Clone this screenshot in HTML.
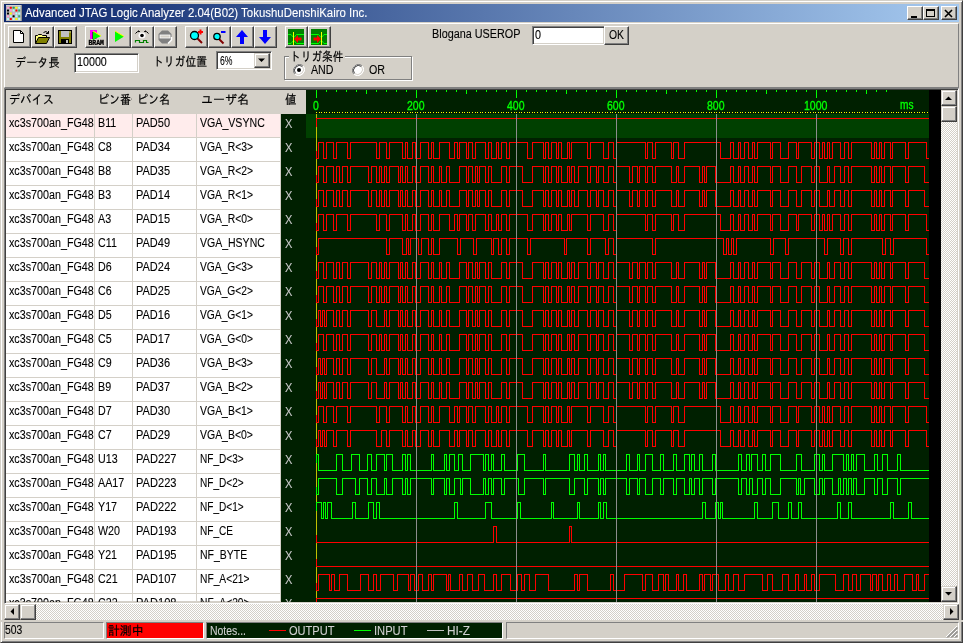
<!DOCTYPE html>
<html lang="ja"><head><meta charset="utf-8"><title>Advanced JTAG Logic Analyzer</title>
<style>
html,body{margin:0;padding:0}
body{width:963px;height:643px;overflow:hidden;background:#d4d0c8;position:relative;font-family:"Liberation Sans","IPAGothic",sans-serif;font-size:12px}
div,span,svg{position:absolute;box-sizing:border-box}
.t{white-space:pre;line-height:16px;height:16px;transform-origin:0 0;display:block}
.L{font-family:"Liberation Sans",sans-serif;-webkit-text-stroke:0.1px}
.J{font-family:"Liberation Sans","IPAGothic","Noto Sans CJK JP",sans-serif;-webkit-text-stroke:0.2px}
.btn{background:#d4d0c8;border:1px solid;border-color:#fff #404040 #404040 #fff;box-shadow:inset -1px -1px 0 #808080}
.sbtn{background:#d4d0c8;border:1px solid;border-color:#d4d0c8 #404040 #404040 #d4d0c8;box-shadow:inset -1px -1px 0 #808080,inset 1px 1px 0 #fff}
.sunk{background:#fff;border:1px solid;border-color:#808080 #fff #fff #808080;box-shadow:inset 1px 1px 0 #404040,inset -1px -1px 0 #d4d0c8}
.stat{border:1px solid;border-color:#808080 #fff #fff #808080}
.track{background:repeating-conic-gradient(#fff 0% 25%,#d4d0c8 0% 50%) 0 0/2px 2px}
.cell{border-right:1px solid #d4d0c8;border-bottom:1px solid #d4d0c8;background:#fff}
</style></head>
<body>
<div id="app" style="left:0;top:0;width:963px;height:643px;will-change:transform">
<div class="" style="left:0px;top:0px;width:963px;height:643px;border:1px solid;border-color:#d4d0c8 #404040 #404040 #d4d0c8;box-shadow:inset 1px 1px 0 #fff,inset -1px -1px 0 #808080"></div>
<div class="" style="left:4px;top:4px;width:955px;height:18px;background:linear-gradient(90deg,#0a246a 0%,#a6caf0 100%)"></div>
<svg style="left:6px;top:5px" width="16" height="16" viewBox="0 0 16 16"><rect width="16" height="16" fill="#b8b8b8"/><rect x="0" y="0" width="15" height="1" fill="#d0d0d0"/><rect x="15" y="0" width="1" height="16" fill="#909090"/><rect x="1.0" y="1.8" width="2" height="2" rx="0.5" fill="#ff9ad0"/><rect x="3.8" y="1.8" width="2" height="2" rx="0.5" fill="#ff0000"/><rect x="6.6" y="1.8" width="2" height="2" rx="0.5" fill="#20a060"/><rect x="9.4" y="1.8" width="2" height="2" rx="0.5" fill="#ffff00"/><rect x="12.2" y="1.8" width="2" height="2" rx="0.5" fill="#b0ffff"/><rect x="1.0" y="4.6" width="2" height="2" rx="0.5" fill="#000000"/><rect x="3.8" y="4.6" width="2" height="2" rx="0.5" fill="#ff9ad0"/><rect x="6.6" y="4.6" width="2" height="2" rx="0.5" fill="#b0ffff"/><rect x="9.4" y="4.6" width="2" height="2" rx="0.5" fill="#ff0000"/><rect x="12.2" y="4.6" width="2" height="2" rx="0.5" fill="#30b070"/><rect x="1.0" y="7.4" width="2" height="2" rx="0.5" fill="#000000"/><rect x="3.8" y="7.4" width="2" height="2" rx="0.5" fill="#ffff00"/><rect x="6.6" y="7.4" width="2" height="2" rx="0.5" fill="#ff9ad0"/><rect x="9.4" y="7.4" width="2" height="2" rx="0.5" fill="#b0ffff"/><rect x="12.2" y="7.4" width="2" height="2" rx="0.5" fill="#b0ffff"/><rect x="1.0" y="10.2" width="2" height="2" rx="0.5" fill="#ff9ad0"/><rect x="3.8" y="10.2" width="2" height="2" rx="0.5" fill="#b0ffff"/><rect x="6.6" y="10.2" width="2" height="2" rx="0.5" fill="#000000"/><rect x="9.4" y="10.2" width="2" height="2" rx="0.5" fill="#b0ffff"/><rect x="12.2" y="10.2" width="2" height="2" rx="0.5" fill="#30b070"/><rect x="1.0" y="13.0" width="2" height="2" rx="0.5" fill="#b0ffff"/><rect x="3.8" y="13.0" width="2" height="2" rx="0.5" fill="#ff0000"/><rect x="6.6" y="13.0" width="2" height="2" rx="0.5" fill="#b0ffff"/><rect x="9.4" y="13.0" width="2" height="2" rx="0.5" fill="#ffff00"/><rect x="12.2" y="13.0" width="2" height="2" rx="0.5" fill="#b0ffff"/></svg>
<div class="btn" style="left:907px;top:6px;width:16px;height:14px;"><svg style="left:0;top:0" width="14" height="12" viewBox="0 0 14 12"><rect x="3" y="9" width="6" height="2" fill="#000"/></svg></div>
<div class="btn" style="left:923px;top:6px;width:16px;height:14px;"><svg style="left:0;top:0" width="14" height="12" viewBox="0 0 14 12"><rect x="2.5" y="2.5" width="8" height="7" fill="none" stroke="#000"/><rect x="2" y="2" width="9" height="2" fill="#000"/></svg></div>
<div class="btn" style="left:941px;top:6px;width:16px;height:14px;"><svg style="left:0;top:0" width="14" height="12" viewBox="0 0 14 12"><path d="M3 3 L10 10 M10 3 L3 10" stroke="#000" stroke-width="1.6" fill="none"/></svg></div>
<div class="" style="left:4px;top:23px;width:955px;height:65px;border:1px solid;border-color:#fff #808080 #808080 #fff"></div>
<div class="btn" style="left:8px;top:26px;width:23px;height:22px;"><svg style="left:2px;top:2px" width="16" height="16" viewBox="0 0 16 16"><path d="M2.5 1.5 H9.5 L12.5 4.5 V13.5 H2.5 Z" fill="#fff" stroke="#000"/><path d="M9.5 1.5 V4.5 H12.5" fill="none" stroke="#000"/></svg></div>
<div class="btn" style="left:31px;top:26px;width:23px;height:22px;"><svg style="left:2px;top:2px" width="16" height="16" viewBox="0 0 16 16"><path d="M1.5 14.5 V6.5 H3.5 L4.5 5.5 H7.5 L8.5 6.5 H12.5 V8.5" fill="#ffff80" stroke="#000"/><path d="M1.5 14.5 L4.5 8.5 H15.5 L12.5 14.5 Z" fill="#808000" stroke="#000"/><path d="M9.5 3.5 Q12 1 14.5 4.5 M14.5 4.5 V2 M14.5 4.5 H12" fill="none" stroke="#000"/></svg></div>
<div class="btn" style="left:54px;top:26px;width:23px;height:22px;"><svg style="left:2px;top:2px" width="16" height="16" viewBox="0 0 16 16"><rect x="1.5" y="1.5" width="13" height="13" fill="#808000" stroke="#000"/><rect x="4" y="2" width="8" height="6" fill="#c0c0c0"/><rect x="4" y="10" width="8" height="5" fill="#000"/><rect x="9" y="11" width="2" height="3" fill="#c0c0c0"/><rect x="12.5" y="2.5" width="1" height="1" fill="#fff"/></svg></div>
<div class="btn" style="left:85px;top:26px;width:23px;height:22px;"><svg style="left:2px;top:2px" width="16" height="16" viewBox="0 0 16 16"><rect x="2" y="1" width="7" height="9" fill="#ff00ff"/><rect x="4" y="3" width="4" height="7" fill="#800080"/><path d="M5 2 L13 7 L5 11 Z" fill="#00ff00"/><path d="M5 2 L13 7" stroke="#ffff00" fill="none"/><text x="0.5" y="16" font-family="Liberation Mono,monospace" font-weight="bold" font-size="7" stroke="#000" stroke-width="0.3" textLength="15.5" lengthAdjust="spacingAndGlyphs" fill="#000">BRAM</text></svg></div>
<div class="btn" style="left:108px;top:26px;width:23px;height:22px;"><svg style="left:2px;top:2px" width="16" height="16" viewBox="0 0 16 16"><path d="M4 2 L13 7.5 L4 13 Z" fill="#00ff00"/><path d="M4 2 L13 7.5" stroke="#ffff00" fill="none"/></svg></div>
<div class="btn" style="left:131px;top:26px;width:23px;height:22px;"><svg style="left:2px;top:2px" width="16" height="16" viewBox="0 0 16 16"><ellipse cx="8" cy="6.5" rx="3.5" ry="3" fill="#fff"/><circle cx="8" cy="6.5" r="1.8" fill="#000"/><path d="M1.5 4.5 Q3 2 5.5 2.5 M10.5 2.5 Q13 2 14.5 4.5 M4.5 1.5 L5.5 3 M11.5 1.5 L10.5 3" stroke="#000" fill="none"/><path d="M1.5 13.5 V11.5 H5.5 V13.5 H9.5 V11.5 H12.5 V13.5 H14.5" stroke="#008000" fill="none" stroke-width="1.2"/></svg></div>
<div class="btn" style="left:154px;top:26px;width:23px;height:22px;"><svg style="left:2px;top:2px" width="16" height="16" viewBox="0 0 16 16"><path d="M5 1.5 H11 L14.5 5 V11 L11 14.5 H5 L1.5 11 V5 Z" fill="#808080"/><path d="M11 14.5 L14.5 11 V8" stroke="#fff" fill="none" stroke-width="1.5"/><rect x="3" y="6" width="10" height="3" fill="#d4d0c8" stroke="#fff" stroke-width="0.8"/></svg></div>
<div class="btn" style="left:185px;top:26px;width:23px;height:22px;"><svg style="left:2px;top:2px" width="16" height="16" viewBox="0 0 16 16"><path d="M9 9 L14 14" stroke="#800000" stroke-width="2"/><circle cx="6.5" cy="6.5" r="4" fill="#00ffff" stroke="#000" stroke-width="1.3"/><path d="M10 3 H15 M12.5 0.5 V5.5" stroke="#ff0000" stroke-width="2"/></svg></div>
<div class="btn" style="left:208px;top:26px;width:23px;height:22px;"><svg style="left:2px;top:2px" width="16" height="16" viewBox="0 0 16 16"><path d="M8 10 L12.5 14.5" stroke="#800000" stroke-width="2"/><circle cx="6" cy="7.5" r="3.2" fill="#00ffff" stroke="#000" stroke-width="1.3"/><path d="M10 3 H14.5" stroke="#0000ff" stroke-width="2"/></svg></div>
<div class="btn" style="left:231px;top:26px;width:23px;height:22px;"><svg style="left:2px;top:2px" width="16" height="16" viewBox="0 0 16 16"><path d="M8 1 L14 8 H10 V15 H6 V8 H2 Z" fill="#0000ff"/></svg></div>
<div class="btn" style="left:254px;top:26px;width:23px;height:22px;"><svg style="left:2px;top:2px" width="16" height="16" viewBox="0 0 16 16"><path d="M8 15 L14 8 H10 V1 H6 V8 H2 Z" fill="#0000ff"/></svg></div>
<div class="btn" style="left:285px;top:26px;width:23px;height:22px;"><svg style="left:2px;top:2px" width="16" height="16" viewBox="0 0 16 16"><rect width="16" height="16" fill="#008000"/><path d="M0 5.5 H3 L5.5 8.5 M0 14.5 H3 L5.5 11.5 M16 5.5 H8.5 L6 8.5 M16 14.5 H8.5 L6 11.5" stroke="#00ff00" fill="none"/><path d="M5.5 3 V16" stroke="#ffff00"/><path d="M6 10 L10 6 V8.5 H13.5 V11.5 H10 V14 Z" fill="#ff0000"/></svg></div>
<div class="btn" style="left:308px;top:26px;width:23px;height:22px;"><svg style="left:2px;top:2px" width="16" height="16" viewBox="0 0 16 16"><rect width="16" height="16" fill="#008000"/><path d="M16 5.5 H13 L10.5 8.5 M16 14.5 H13 L10.5 11.5 M0 5.5 H7.5 L10 8.5 M0 14.5 H7.5 L10 11.5" stroke="#00ff00" fill="none"/><path d="M10.5 3 V16" stroke="#ffff00"/><path d="M10 10 L6 6 V8.5 H2.5 V11.5 H6 V14 Z" fill="#ff0000"/></svg></div>
<div class="sunk" style="left:74px;top:53px;width:65px;height:20px;"></div>
<div class="sunk" style="left:216px;top:51px;width:56px;height:19px;"></div>
<div class="sbtn" style="left:254px;top:53px;width:16px;height:15px;"><svg style="left:0;top:0" width="14" height="13"><path d="M3 4.5 H10 L6.5 8 Z" fill="#000"/></svg></div>
<div class="" style="left:284px;top:56px;width:128px;height:24px;border:1px solid;border-color:#808080 #fff #fff #808080;box-shadow:inset 1px 1px 0 #fff, 1px 1px 0 #fff"></div>
<div class="" style="left:284px;top:56px;width:128px;height:24px;border:1px solid;border-color:#808080"></div>
<div class="" style="left:289px;top:50px;width:56px;height:12px;background:#d4d0c8"></div>
<svg style="left:293px;top:64px" width="12" height="12" viewBox="0 0 12 12"><circle cx="6" cy="6" r="5.5" fill="#fff"/><path d="M1.8 10.2 A6 6 0 0 1 10.2 1.8" stroke="#808080" fill="none" stroke-width="1"/><path d="M2.5 9.5 A5 5 0 0 1 9.5 2.5" stroke="#404040" fill="none" stroke-width="1"/><path d="M10.2 1.8 A6 6 0 0 1 1.8 10.2" stroke="#fff" fill="none" stroke-width="1"/><path d="M9.5 2.5 A5 5 0 0 1 2.5 9.5" stroke="#d4d0c8" fill="none" stroke-width="1"/><circle cx="6" cy="6" r="2" fill="#000"/></svg>
<svg style="left:352px;top:64px" width="12" height="12" viewBox="0 0 12 12"><circle cx="6" cy="6" r="5.5" fill="#fff"/><path d="M1.8 10.2 A6 6 0 0 1 10.2 1.8" stroke="#808080" fill="none" stroke-width="1"/><path d="M2.5 9.5 A5 5 0 0 1 9.5 2.5" stroke="#404040" fill="none" stroke-width="1"/><path d="M10.2 1.8 A6 6 0 0 1 1.8 10.2" stroke="#fff" fill="none" stroke-width="1"/><path d="M9.5 2.5 A5 5 0 0 1 2.5 9.5" stroke="#d4d0c8" fill="none" stroke-width="1"/></svg>
<div class="sunk" style="left:532px;top:26px;width:73px;height:19px;"></div>
<div class="btn" style="left:604px;top:26px;width:25px;height:19px;"></div>
<div class="" style="left:4px;top:88px;width:955px;height:516px;border:1px solid;border-color:#808080 #fff #fff #808080;box-shadow:inset 1px 1px 0 #404040,inset -1px -1px 0 #d4d0c8"></div>
<div class="" style="left:6px;top:90px;width:300px;height:512px;background:#fff"></div>
<div class="" style="left:6px;top:90px;width:300px;height:24px;background:#d4d0c8"></div>
<div class="cell" style="left:6px;top:114px;width:89px;height:24px;background:#ffecec"></div>
<div class="cell" style="left:95px;top:114px;width:38px;height:24px;background:#ffecec"></div>
<div class="cell" style="left:133px;top:114px;width:64px;height:24px;background:#ffecec"></div>
<div class="cell" style="left:197px;top:114px;width:84px;height:24px;background:#ffecec"></div>
<div class="" style="left:281px;top:114px;width:25px;height:24px;background:#002000"></div>
<div class="cell" style="left:6px;top:138px;width:89px;height:24px;background:#fff"></div>
<div class="cell" style="left:95px;top:138px;width:38px;height:24px;background:#fff"></div>
<div class="cell" style="left:133px;top:138px;width:64px;height:24px;background:#fff"></div>
<div class="cell" style="left:197px;top:138px;width:84px;height:24px;background:#fff"></div>
<div class="" style="left:281px;top:138px;width:25px;height:24px;background:#002000"></div>
<div class="cell" style="left:6px;top:162px;width:89px;height:24px;background:#fff"></div>
<div class="cell" style="left:95px;top:162px;width:38px;height:24px;background:#fff"></div>
<div class="cell" style="left:133px;top:162px;width:64px;height:24px;background:#fff"></div>
<div class="cell" style="left:197px;top:162px;width:84px;height:24px;background:#fff"></div>
<div class="" style="left:281px;top:162px;width:25px;height:24px;background:#002000"></div>
<div class="cell" style="left:6px;top:186px;width:89px;height:24px;background:#fff"></div>
<div class="cell" style="left:95px;top:186px;width:38px;height:24px;background:#fff"></div>
<div class="cell" style="left:133px;top:186px;width:64px;height:24px;background:#fff"></div>
<div class="cell" style="left:197px;top:186px;width:84px;height:24px;background:#fff"></div>
<div class="" style="left:281px;top:186px;width:25px;height:24px;background:#002000"></div>
<div class="cell" style="left:6px;top:210px;width:89px;height:24px;background:#fff"></div>
<div class="cell" style="left:95px;top:210px;width:38px;height:24px;background:#fff"></div>
<div class="cell" style="left:133px;top:210px;width:64px;height:24px;background:#fff"></div>
<div class="cell" style="left:197px;top:210px;width:84px;height:24px;background:#fff"></div>
<div class="" style="left:281px;top:210px;width:25px;height:24px;background:#002000"></div>
<div class="cell" style="left:6px;top:234px;width:89px;height:24px;background:#fff"></div>
<div class="cell" style="left:95px;top:234px;width:38px;height:24px;background:#fff"></div>
<div class="cell" style="left:133px;top:234px;width:64px;height:24px;background:#fff"></div>
<div class="cell" style="left:197px;top:234px;width:84px;height:24px;background:#fff"></div>
<div class="" style="left:281px;top:234px;width:25px;height:24px;background:#002000"></div>
<div class="cell" style="left:6px;top:258px;width:89px;height:24px;background:#fff"></div>
<div class="cell" style="left:95px;top:258px;width:38px;height:24px;background:#fff"></div>
<div class="cell" style="left:133px;top:258px;width:64px;height:24px;background:#fff"></div>
<div class="cell" style="left:197px;top:258px;width:84px;height:24px;background:#fff"></div>
<div class="" style="left:281px;top:258px;width:25px;height:24px;background:#002000"></div>
<div class="cell" style="left:6px;top:282px;width:89px;height:24px;background:#fff"></div>
<div class="cell" style="left:95px;top:282px;width:38px;height:24px;background:#fff"></div>
<div class="cell" style="left:133px;top:282px;width:64px;height:24px;background:#fff"></div>
<div class="cell" style="left:197px;top:282px;width:84px;height:24px;background:#fff"></div>
<div class="" style="left:281px;top:282px;width:25px;height:24px;background:#002000"></div>
<div class="cell" style="left:6px;top:306px;width:89px;height:24px;background:#fff"></div>
<div class="cell" style="left:95px;top:306px;width:38px;height:24px;background:#fff"></div>
<div class="cell" style="left:133px;top:306px;width:64px;height:24px;background:#fff"></div>
<div class="cell" style="left:197px;top:306px;width:84px;height:24px;background:#fff"></div>
<div class="" style="left:281px;top:306px;width:25px;height:24px;background:#002000"></div>
<div class="cell" style="left:6px;top:330px;width:89px;height:24px;background:#fff"></div>
<div class="cell" style="left:95px;top:330px;width:38px;height:24px;background:#fff"></div>
<div class="cell" style="left:133px;top:330px;width:64px;height:24px;background:#fff"></div>
<div class="cell" style="left:197px;top:330px;width:84px;height:24px;background:#fff"></div>
<div class="" style="left:281px;top:330px;width:25px;height:24px;background:#002000"></div>
<div class="cell" style="left:6px;top:354px;width:89px;height:24px;background:#fff"></div>
<div class="cell" style="left:95px;top:354px;width:38px;height:24px;background:#fff"></div>
<div class="cell" style="left:133px;top:354px;width:64px;height:24px;background:#fff"></div>
<div class="cell" style="left:197px;top:354px;width:84px;height:24px;background:#fff"></div>
<div class="" style="left:281px;top:354px;width:25px;height:24px;background:#002000"></div>
<div class="cell" style="left:6px;top:378px;width:89px;height:24px;background:#fff"></div>
<div class="cell" style="left:95px;top:378px;width:38px;height:24px;background:#fff"></div>
<div class="cell" style="left:133px;top:378px;width:64px;height:24px;background:#fff"></div>
<div class="cell" style="left:197px;top:378px;width:84px;height:24px;background:#fff"></div>
<div class="" style="left:281px;top:378px;width:25px;height:24px;background:#002000"></div>
<div class="cell" style="left:6px;top:402px;width:89px;height:24px;background:#fff"></div>
<div class="cell" style="left:95px;top:402px;width:38px;height:24px;background:#fff"></div>
<div class="cell" style="left:133px;top:402px;width:64px;height:24px;background:#fff"></div>
<div class="cell" style="left:197px;top:402px;width:84px;height:24px;background:#fff"></div>
<div class="" style="left:281px;top:402px;width:25px;height:24px;background:#002000"></div>
<div class="cell" style="left:6px;top:426px;width:89px;height:24px;background:#fff"></div>
<div class="cell" style="left:95px;top:426px;width:38px;height:24px;background:#fff"></div>
<div class="cell" style="left:133px;top:426px;width:64px;height:24px;background:#fff"></div>
<div class="cell" style="left:197px;top:426px;width:84px;height:24px;background:#fff"></div>
<div class="" style="left:281px;top:426px;width:25px;height:24px;background:#002000"></div>
<div class="cell" style="left:6px;top:450px;width:89px;height:24px;background:#fff"></div>
<div class="cell" style="left:95px;top:450px;width:38px;height:24px;background:#fff"></div>
<div class="cell" style="left:133px;top:450px;width:64px;height:24px;background:#fff"></div>
<div class="cell" style="left:197px;top:450px;width:84px;height:24px;background:#fff"></div>
<div class="" style="left:281px;top:450px;width:25px;height:24px;background:#002000"></div>
<div class="cell" style="left:6px;top:474px;width:89px;height:24px;background:#fff"></div>
<div class="cell" style="left:95px;top:474px;width:38px;height:24px;background:#fff"></div>
<div class="cell" style="left:133px;top:474px;width:64px;height:24px;background:#fff"></div>
<div class="cell" style="left:197px;top:474px;width:84px;height:24px;background:#fff"></div>
<div class="" style="left:281px;top:474px;width:25px;height:24px;background:#002000"></div>
<div class="cell" style="left:6px;top:498px;width:89px;height:24px;background:#fff"></div>
<div class="cell" style="left:95px;top:498px;width:38px;height:24px;background:#fff"></div>
<div class="cell" style="left:133px;top:498px;width:64px;height:24px;background:#fff"></div>
<div class="cell" style="left:197px;top:498px;width:84px;height:24px;background:#fff"></div>
<div class="" style="left:281px;top:498px;width:25px;height:24px;background:#002000"></div>
<div class="cell" style="left:6px;top:522px;width:89px;height:24px;background:#fff"></div>
<div class="cell" style="left:95px;top:522px;width:38px;height:24px;background:#fff"></div>
<div class="cell" style="left:133px;top:522px;width:64px;height:24px;background:#fff"></div>
<div class="cell" style="left:197px;top:522px;width:84px;height:24px;background:#fff"></div>
<div class="" style="left:281px;top:522px;width:25px;height:24px;background:#002000"></div>
<div class="cell" style="left:6px;top:546px;width:89px;height:24px;background:#fff"></div>
<div class="cell" style="left:95px;top:546px;width:38px;height:24px;background:#fff"></div>
<div class="cell" style="left:133px;top:546px;width:64px;height:24px;background:#fff"></div>
<div class="cell" style="left:197px;top:546px;width:84px;height:24px;background:#fff"></div>
<div class="" style="left:281px;top:546px;width:25px;height:24px;background:#002000"></div>
<div class="cell" style="left:6px;top:570px;width:89px;height:24px;background:#fff"></div>
<div class="cell" style="left:95px;top:570px;width:38px;height:24px;background:#fff"></div>
<div class="cell" style="left:133px;top:570px;width:64px;height:24px;background:#fff"></div>
<div class="cell" style="left:197px;top:570px;width:84px;height:24px;background:#fff"></div>
<div class="" style="left:281px;top:570px;width:25px;height:24px;background:#002000"></div>
<div class="cell" style="left:6px;top:594px;width:89px;height:8px;background:#fff"></div>
<div class="cell" style="left:95px;top:594px;width:38px;height:8px;background:#fff"></div>
<div class="cell" style="left:133px;top:594px;width:64px;height:8px;background:#fff"></div>
<div class="cell" style="left:197px;top:594px;width:84px;height:8px;background:#fff"></div>
<div class="" style="left:281px;top:594px;width:25px;height:8px;background:#002000"></div>
<svg style="left:306px;top:90px" width="623" height="512" viewBox="306 90 623 512" shape-rendering="crispEdges"><rect x="306" y="90" width="623" height="512" fill="#002000"/><rect x="306" y="114" width="623" height="24" fill="#004000"/><path d="M316.5 90 v8 M326.5 90 v2 M336.5 90 v2 M346.5 90 v2 M356.5 90 v2 M366.5 90 v4 M376.5 90 v2 M386.5 90 v2 M396.5 90 v2 M406.5 90 v2 M416.5 90 v8 M426.5 90 v2 M436.5 90 v2 M446.5 90 v2 M456.5 90 v2 M466.5 90 v4 M476.5 90 v2 M486.5 90 v2 M496.5 90 v2 M506.5 90 v2 M516.5 90 v8 M526.5 90 v2 M536.5 90 v2 M546.5 90 v2 M556.5 90 v2 M566.5 90 v4 M576.5 90 v2 M586.5 90 v2 M596.5 90 v2 M606.5 90 v2 M616.5 90 v8 M626.5 90 v2 M636.5 90 v2 M646.5 90 v2 M656.5 90 v2 M666.5 90 v4 M676.5 90 v2 M686.5 90 v2 M696.5 90 v2 M706.5 90 v2 M716.5 90 v8 M726.5 90 v2 M736.5 90 v2 M746.5 90 v2 M756.5 90 v2 M766.5 90 v4 M776.5 90 v2 M786.5 90 v2 M796.5 90 v2 M806.5 90 v2 M816.5 90 v8 M826.5 90 v2 M836.5 90 v2 M846.5 90 v2 M856.5 90 v2 M866.5 90 v4 M876.5 90 v2 M886.5 90 v2" stroke="#00ff00" fill="none"/><path d="M316 112.5 H929" stroke="#ffff00" stroke-dasharray="1 1.6" fill="none"/><path d="M316.5 114 V602" stroke="#c0c000" fill="none"/><path d="M316.5 126.5 V118.5H929" stroke="#ff0000" fill="none"/><path d="M316.5 150.5 V158.5H318.5 V142.5H323.5 V158.5H326.5 V142.5H333.5 V158.5H336.5 V142.5H347.5 V158.5H350.5 V142.5H376.5 V158.5H379.5 V142.5H386.5 V158.5H389.5 V142.5H402.5 V158.5H405.5 V142.5H407.5 V158.5H412.5 V142.5H415.5 V158.5H420.5 V142.5H428.5 V158.5H431.5 V142.5H433.5 V158.5H439.5 V142.5H449.5 V158.5H454.5 V142.5H457.5 V158.5H459.5 V142.5H466.5 V158.5H468.5 V142.5H472.5 V158.5H475.5 V142.5H485.5 V158.5H488.5 V142.5H491.5 V158.5H496.5 V142.5H498.5 V158.5H501.5 V142.5H506.5 V158.5H509.5 V142.5H527.5 V158.5H532.5 V142.5H543.5 V158.5H545.5 V142.5H548.5 V158.5H551.5 V142.5H556.5 V158.5H558.5 V142.5H561.5 V158.5H567.5 V142.5H569.5 V158.5H571.5 V142.5H587.5 V158.5H590.5 V142.5H603.5 V158.5H608.5 V142.5H613.5 V158.5H616.5 V142.5H645.5 V158.5H647.5 V142.5H652.5 V158.5H655.5 V142.5H671.5 V158.5H673.5 V142.5H678.5 V158.5H684.5 V142.5H720.5 V158.5H730.5 V142.5H733.5 V158.5H738.5 V142.5H740.5 V158.5H744.5 V142.5H748.5 V158.5H752.5 V142.5H754.5 V158.5H757.5 V142.5H770.5 V158.5H772.5 V142.5H780.5 V158.5H788.5 V142.5H796.5 V158.5H798.5 V142.5H811.5 V158.5H814.5 V142.5H819.5 V158.5H822.5 V142.5H824.5 V158.5H827.5 V142.5H829.5 V158.5H832.5 V142.5H840.5 V158.5H844.5 V142.5H848.5 V158.5H851.5 V142.5H871.5 V158.5H874.5 V142.5H876.5 V158.5H879.5 V142.5H881.5 V158.5H884.5 V142.5H890.5 V158.5H892.5 V142.5H905.5 V158.5H908.5 V142.5H926.5 V158.5H929" stroke="#ff0000" fill="none"/><path d="M316.5 174.5 V182.5H318.5 V166.5H323.5 V182.5H326.5 V166.5H333.5 V182.5H336.5 V166.5H339.5 V182.5H342.5 V166.5H347.5 V182.5H350.5 V166.5H368.5 V182.5H371.5 V166.5H376.5 V182.5H379.5 V166.5H381.5 V182.5H384.5 V166.5H386.5 V182.5H389.5 V166.5H398.5 V182.5H400.5 V166.5H402.5 V182.5H405.5 V166.5H407.5 V182.5H412.5 V166.5H415.5 V182.5H420.5 V166.5H428.5 V182.5H431.5 V166.5H433.5 V182.5H439.5 V166.5H441.5 V182.5H446.5 V166.5H449.5 V182.5H459.5 V166.5H466.5 V182.5H468.5 V166.5H472.5 V182.5H475.5 V166.5H477.5 V182.5H479.5 V166.5H485.5 V182.5H488.5 V166.5H491.5 V182.5H501.5 V166.5H506.5 V182.5H509.5 V166.5H522.5 V182.5H532.5 V166.5H543.5 V182.5H545.5 V166.5H548.5 V182.5H551.5 V166.5H556.5 V182.5H558.5 V166.5H561.5 V182.5H567.5 V166.5H569.5 V182.5H571.5 V166.5H574.5 V182.5H578.5 V166.5H587.5 V182.5H590.5 V166.5H596.5 V182.5H598.5 V166.5H603.5 V182.5H608.5 V166.5H613.5 V182.5H616.5 V166.5H629.5 V182.5H632.5 V166.5H637.5 V182.5H639.5 V166.5H645.5 V182.5H647.5 V166.5H652.5 V182.5H655.5 V166.5H671.5 V182.5H676.5 V166.5H678.5 V182.5H684.5 V166.5H699.5 V182.5H702.5 V166.5H704.5 V182.5H706.5 V166.5H715.5 V182.5H730.5 V166.5H733.5 V182.5H738.5 V166.5H740.5 V182.5H744.5 V166.5H748.5 V182.5H752.5 V166.5H754.5 V182.5H757.5 V166.5H770.5 V182.5H772.5 V166.5H780.5 V182.5H788.5 V166.5H796.5 V182.5H801.5 V166.5H811.5 V182.5H814.5 V166.5H819.5 V182.5H827.5 V166.5H829.5 V182.5H834.5 V166.5H840.5 V182.5H844.5 V166.5H848.5 V182.5H851.5 V166.5H871.5 V182.5H874.5 V166.5H876.5 V182.5H879.5 V166.5H881.5 V182.5H884.5 V166.5H890.5 V182.5H892.5 V166.5H905.5 V182.5H908.5 V166.5H924.5 V182.5H929" stroke="#ff0000" fill="none"/><path d="M316.5 198.5 V206.5H318.5 V190.5H323.5 V206.5H326.5 V190.5H333.5 V206.5H336.5 V190.5H339.5 V206.5H342.5 V190.5H347.5 V206.5H350.5 V190.5H368.5 V206.5H371.5 V190.5H376.5 V206.5H379.5 V190.5H381.5 V206.5H384.5 V190.5H386.5 V206.5H389.5 V190.5H398.5 V206.5H400.5 V190.5H402.5 V206.5H405.5 V190.5H407.5 V206.5H412.5 V190.5H415.5 V206.5H420.5 V190.5H428.5 V206.5H431.5 V190.5H433.5 V206.5H439.5 V190.5H441.5 V206.5H446.5 V190.5H449.5 V206.5H459.5 V190.5H466.5 V206.5H468.5 V190.5H472.5 V206.5H475.5 V190.5H477.5 V206.5H479.5 V190.5H485.5 V206.5H488.5 V190.5H491.5 V206.5H501.5 V190.5H506.5 V206.5H509.5 V190.5H522.5 V206.5H532.5 V190.5H543.5 V206.5H545.5 V190.5H548.5 V206.5H551.5 V190.5H556.5 V206.5H558.5 V190.5H561.5 V206.5H567.5 V190.5H569.5 V206.5H571.5 V190.5H574.5 V206.5H578.5 V190.5H587.5 V206.5H590.5 V190.5H596.5 V206.5H598.5 V190.5H603.5 V206.5H608.5 V190.5H613.5 V206.5H616.5 V190.5H629.5 V206.5H632.5 V190.5H637.5 V206.5H639.5 V190.5H645.5 V206.5H647.5 V190.5H652.5 V206.5H655.5 V190.5H671.5 V206.5H676.5 V190.5H678.5 V206.5H684.5 V190.5H699.5 V206.5H702.5 V190.5H704.5 V206.5H706.5 V190.5H715.5 V206.5H730.5 V190.5H733.5 V206.5H738.5 V190.5H740.5 V206.5H744.5 V190.5H748.5 V206.5H752.5 V190.5H754.5 V206.5H757.5 V190.5H770.5 V206.5H772.5 V190.5H780.5 V206.5H788.5 V190.5H796.5 V206.5H801.5 V190.5H811.5 V206.5H814.5 V190.5H819.5 V206.5H827.5 V190.5H829.5 V206.5H834.5 V190.5H840.5 V206.5H844.5 V190.5H848.5 V206.5H851.5 V190.5H871.5 V206.5H874.5 V190.5H876.5 V206.5H879.5 V190.5H881.5 V206.5H884.5 V190.5H890.5 V206.5H892.5 V190.5H905.5 V206.5H908.5 V190.5H924.5 V206.5H929" stroke="#ff0000" fill="none"/><path d="M316.5 222.5 V230.5H318.5 V214.5H323.5 V230.5H326.5 V214.5H333.5 V230.5H336.5 V214.5H347.5 V230.5H350.5 V214.5H376.5 V230.5H379.5 V214.5H386.5 V230.5H389.5 V214.5H402.5 V230.5H405.5 V214.5H407.5 V230.5H412.5 V214.5H415.5 V230.5H420.5 V214.5H428.5 V230.5H431.5 V214.5H433.5 V230.5H439.5 V214.5H449.5 V230.5H454.5 V214.5H457.5 V230.5H459.5 V214.5H466.5 V230.5H468.5 V214.5H472.5 V230.5H475.5 V214.5H485.5 V230.5H488.5 V214.5H491.5 V230.5H496.5 V214.5H498.5 V230.5H501.5 V214.5H506.5 V230.5H509.5 V214.5H527.5 V230.5H532.5 V214.5H543.5 V230.5H545.5 V214.5H548.5 V230.5H551.5 V214.5H556.5 V230.5H558.5 V214.5H561.5 V230.5H567.5 V214.5H569.5 V230.5H571.5 V214.5H587.5 V230.5H590.5 V214.5H603.5 V230.5H608.5 V214.5H613.5 V230.5H616.5 V214.5H645.5 V230.5H647.5 V214.5H652.5 V230.5H655.5 V214.5H671.5 V230.5H673.5 V214.5H678.5 V230.5H684.5 V214.5H720.5 V230.5H730.5 V214.5H733.5 V230.5H738.5 V214.5H740.5 V230.5H744.5 V214.5H748.5 V230.5H752.5 V214.5H754.5 V230.5H757.5 V214.5H770.5 V230.5H772.5 V214.5H780.5 V230.5H788.5 V214.5H796.5 V230.5H798.5 V214.5H811.5 V230.5H814.5 V214.5H819.5 V230.5H822.5 V214.5H824.5 V230.5H827.5 V214.5H829.5 V230.5H832.5 V214.5H840.5 V230.5H844.5 V214.5H848.5 V230.5H851.5 V214.5H871.5 V230.5H874.5 V214.5H876.5 V230.5H879.5 V214.5H881.5 V230.5H884.5 V214.5H890.5 V230.5H892.5 V214.5H905.5 V230.5H908.5 V214.5H926.5 V230.5H929" stroke="#ff0000" fill="none"/><path d="M316.5 246.5 V254.5H318.5 V238.5H386.5 V254.5H389.5 V238.5H402.5 V254.5H406.5 V238.5H408.5 V254.5H410.5 V238.5H418.5 V254.5H421.5 V238.5H428.5 V254.5H431.5 V238.5H433.5 V254.5H439.5 V238.5H457.5 V254.5H460.5 V238.5H473.5 V254.5H476.5 V238.5H491.5 V254.5H493.5 V238.5H498.5 V254.5H501.5 V238.5H506.5 V254.5H509.5 V238.5H527.5 V254.5H530.5 V238.5H564.5 V254.5H566.5 V238.5H587.5 V254.5H590.5 V238.5H605.5 V254.5H608.5 V238.5H613.5 V254.5H616.5 V238.5H652.5 V254.5H655.5 V238.5H723.5 V254.5H726.5 V238.5H728.5 V254.5H731.5 V238.5H733.5 V254.5H736.5 V238.5H770.5 V254.5H773.5 V238.5H785.5 V254.5H788.5 V238.5H824.5 V254.5H827.5 V238.5H840.5 V254.5H843.5 V238.5H848.5 V254.5H851.5 V238.5H882.5 V254.5H885.5 V238.5H890.5 V254.5H893.5 V238.5H926.5 V254.5H929" stroke="#ff0000" fill="none"/><path d="M316.5 270.5 V278.5H318.5 V262.5H323.5 V278.5H326.5 V262.5H333.5 V278.5H336.5 V262.5H339.5 V278.5H342.5 V262.5H347.5 V278.5H350.5 V262.5H368.5 V278.5H371.5 V262.5H376.5 V278.5H379.5 V262.5H381.5 V278.5H384.5 V262.5H386.5 V278.5H389.5 V262.5H398.5 V278.5H400.5 V262.5H402.5 V278.5H405.5 V262.5H407.5 V278.5H412.5 V262.5H415.5 V278.5H420.5 V262.5H428.5 V278.5H431.5 V262.5H433.5 V278.5H439.5 V262.5H441.5 V278.5H446.5 V262.5H449.5 V278.5H459.5 V262.5H466.5 V278.5H468.5 V262.5H472.5 V278.5H475.5 V262.5H477.5 V278.5H479.5 V262.5H485.5 V278.5H488.5 V262.5H491.5 V278.5H501.5 V262.5H506.5 V278.5H509.5 V262.5H522.5 V278.5H532.5 V262.5H543.5 V278.5H545.5 V262.5H548.5 V278.5H551.5 V262.5H556.5 V278.5H558.5 V262.5H561.5 V278.5H567.5 V262.5H569.5 V278.5H571.5 V262.5H574.5 V278.5H578.5 V262.5H587.5 V278.5H590.5 V262.5H596.5 V278.5H598.5 V262.5H603.5 V278.5H608.5 V262.5H613.5 V278.5H616.5 V262.5H629.5 V278.5H632.5 V262.5H637.5 V278.5H639.5 V262.5H645.5 V278.5H647.5 V262.5H652.5 V278.5H655.5 V262.5H671.5 V278.5H676.5 V262.5H678.5 V278.5H684.5 V262.5H699.5 V278.5H702.5 V262.5H704.5 V278.5H706.5 V262.5H715.5 V278.5H730.5 V262.5H733.5 V278.5H738.5 V262.5H740.5 V278.5H744.5 V262.5H748.5 V278.5H752.5 V262.5H754.5 V278.5H757.5 V262.5H770.5 V278.5H772.5 V262.5H780.5 V278.5H788.5 V262.5H796.5 V278.5H801.5 V262.5H811.5 V278.5H814.5 V262.5H819.5 V278.5H827.5 V262.5H829.5 V278.5H834.5 V262.5H840.5 V278.5H844.5 V262.5H848.5 V278.5H851.5 V262.5H871.5 V278.5H874.5 V262.5H876.5 V278.5H879.5 V262.5H881.5 V278.5H884.5 V262.5H890.5 V278.5H892.5 V262.5H905.5 V278.5H908.5 V262.5H924.5 V278.5H929" stroke="#ff0000" fill="none"/><path d="M316.5 294.5 V302.5H318.5 V286.5H323.5 V302.5H326.5 V286.5H333.5 V302.5H336.5 V286.5H339.5 V302.5H342.5 V286.5H347.5 V302.5H350.5 V286.5H368.5 V302.5H371.5 V286.5H376.5 V302.5H379.5 V286.5H381.5 V302.5H384.5 V286.5H386.5 V302.5H389.5 V286.5H398.5 V302.5H400.5 V286.5H402.5 V302.5H405.5 V286.5H407.5 V302.5H412.5 V286.5H415.5 V302.5H420.5 V286.5H428.5 V302.5H431.5 V286.5H433.5 V302.5H439.5 V286.5H441.5 V302.5H446.5 V286.5H449.5 V302.5H459.5 V286.5H466.5 V302.5H468.5 V286.5H472.5 V302.5H475.5 V286.5H477.5 V302.5H479.5 V286.5H485.5 V302.5H488.5 V286.5H491.5 V302.5H501.5 V286.5H506.5 V302.5H509.5 V286.5H522.5 V302.5H532.5 V286.5H543.5 V302.5H545.5 V286.5H548.5 V302.5H551.5 V286.5H556.5 V302.5H558.5 V286.5H561.5 V302.5H567.5 V286.5H569.5 V302.5H571.5 V286.5H574.5 V302.5H578.5 V286.5H587.5 V302.5H590.5 V286.5H596.5 V302.5H598.5 V286.5H603.5 V302.5H608.5 V286.5H613.5 V302.5H616.5 V286.5H629.5 V302.5H632.5 V286.5H637.5 V302.5H639.5 V286.5H645.5 V302.5H647.5 V286.5H652.5 V302.5H655.5 V286.5H671.5 V302.5H676.5 V286.5H678.5 V302.5H684.5 V286.5H699.5 V302.5H702.5 V286.5H704.5 V302.5H706.5 V286.5H715.5 V302.5H730.5 V286.5H733.5 V302.5H738.5 V286.5H740.5 V302.5H744.5 V286.5H748.5 V302.5H752.5 V286.5H754.5 V302.5H757.5 V286.5H770.5 V302.5H772.5 V286.5H780.5 V302.5H788.5 V286.5H796.5 V302.5H801.5 V286.5H811.5 V302.5H814.5 V286.5H819.5 V302.5H827.5 V286.5H829.5 V302.5H834.5 V286.5H840.5 V302.5H844.5 V286.5H848.5 V302.5H851.5 V286.5H871.5 V302.5H874.5 V286.5H876.5 V302.5H879.5 V286.5H881.5 V302.5H884.5 V286.5H890.5 V302.5H892.5 V286.5H905.5 V302.5H908.5 V286.5H924.5 V302.5H929" stroke="#ff0000" fill="none"/><path d="M316.5 318.5 V326.5H318.5 V310.5H320.5 V326.5H322.5 V310.5H324.5 V326.5H326.5 V310.5H333.5 V326.5H336.5 V310.5H339.5 V326.5H342.5 V310.5H347.5 V326.5H350.5 V310.5H368.5 V326.5H371.5 V310.5H376.5 V326.5H384.5 V310.5H386.5 V326.5H389.5 V310.5H398.5 V326.5H400.5 V310.5H402.5 V326.5H405.5 V310.5H407.5 V326.5H412.5 V310.5H415.5 V326.5H420.5 V310.5H428.5 V326.5H431.5 V310.5H433.5 V326.5H439.5 V310.5H441.5 V326.5H446.5 V310.5H449.5 V326.5H459.5 V310.5H466.5 V326.5H468.5 V310.5H472.5 V326.5H475.5 V310.5H477.5 V326.5H479.5 V310.5H485.5 V326.5H488.5 V310.5H491.5 V326.5H501.5 V310.5H506.5 V326.5H509.5 V310.5H522.5 V326.5H532.5 V310.5H543.5 V326.5H545.5 V310.5H548.5 V326.5H551.5 V310.5H556.5 V326.5H558.5 V310.5H561.5 V326.5H567.5 V310.5H569.5 V326.5H571.5 V310.5H574.5 V326.5H578.5 V310.5H587.5 V326.5H590.5 V310.5H596.5 V326.5H598.5 V310.5H603.5 V326.5H608.5 V310.5H613.5 V326.5H616.5 V310.5H629.5 V326.5H632.5 V310.5H637.5 V326.5H639.5 V310.5H645.5 V326.5H647.5 V310.5H652.5 V326.5H655.5 V310.5H671.5 V326.5H676.5 V310.5H678.5 V326.5H684.5 V310.5H699.5 V326.5H702.5 V310.5H704.5 V326.5H706.5 V310.5H715.5 V326.5H730.5 V310.5H733.5 V326.5H738.5 V310.5H740.5 V326.5H744.5 V310.5H748.5 V326.5H752.5 V310.5H754.5 V326.5H757.5 V310.5H770.5 V326.5H772.5 V310.5H780.5 V326.5H788.5 V310.5H796.5 V326.5H801.5 V310.5H811.5 V326.5H814.5 V310.5H819.5 V326.5H827.5 V310.5H829.5 V326.5H834.5 V310.5H840.5 V326.5H844.5 V310.5H848.5 V326.5H851.5 V310.5H871.5 V326.5H874.5 V310.5H876.5 V326.5H879.5 V310.5H881.5 V326.5H884.5 V310.5H890.5 V326.5H892.5 V310.5H905.5 V326.5H908.5 V310.5H924.5 V326.5H929" stroke="#ff0000" fill="none"/><path d="M316.5 342.5 V350.5H318.5 V334.5H323.5 V350.5H326.5 V334.5H333.5 V350.5H336.5 V334.5H339.5 V350.5H342.5 V334.5H347.5 V350.5H350.5 V334.5H368.5 V350.5H371.5 V334.5H376.5 V350.5H379.5 V334.5H381.5 V350.5H384.5 V334.5H386.5 V350.5H389.5 V334.5H398.5 V350.5H400.5 V334.5H402.5 V350.5H405.5 V334.5H407.5 V350.5H412.5 V334.5H415.5 V350.5H420.5 V334.5H428.5 V350.5H431.5 V334.5H433.5 V350.5H439.5 V334.5H441.5 V350.5H446.5 V334.5H449.5 V350.5H459.5 V334.5H466.5 V350.5H468.5 V334.5H472.5 V350.5H475.5 V334.5H477.5 V350.5H479.5 V334.5H485.5 V350.5H488.5 V334.5H491.5 V350.5H501.5 V334.5H506.5 V350.5H509.5 V334.5H522.5 V350.5H532.5 V334.5H543.5 V350.5H545.5 V334.5H548.5 V350.5H551.5 V334.5H556.5 V350.5H558.5 V334.5H561.5 V350.5H567.5 V334.5H569.5 V350.5H571.5 V334.5H574.5 V350.5H578.5 V334.5H587.5 V350.5H590.5 V334.5H596.5 V350.5H598.5 V334.5H603.5 V350.5H608.5 V334.5H613.5 V350.5H616.5 V334.5H629.5 V350.5H632.5 V334.5H637.5 V350.5H639.5 V334.5H645.5 V350.5H647.5 V334.5H652.5 V350.5H655.5 V334.5H671.5 V350.5H676.5 V334.5H678.5 V350.5H684.5 V334.5H699.5 V350.5H702.5 V334.5H704.5 V350.5H706.5 V334.5H715.5 V350.5H730.5 V334.5H733.5 V350.5H738.5 V334.5H740.5 V350.5H744.5 V334.5H748.5 V350.5H752.5 V334.5H754.5 V350.5H757.5 V334.5H770.5 V350.5H772.5 V334.5H780.5 V350.5H788.5 V334.5H796.5 V350.5H801.5 V334.5H811.5 V350.5H814.5 V334.5H819.5 V350.5H827.5 V334.5H829.5 V350.5H834.5 V334.5H840.5 V350.5H844.5 V334.5H848.5 V350.5H851.5 V334.5H871.5 V350.5H874.5 V334.5H876.5 V350.5H879.5 V334.5H881.5 V350.5H884.5 V334.5H890.5 V350.5H892.5 V334.5H905.5 V350.5H908.5 V334.5H924.5 V350.5H929" stroke="#ff0000" fill="none"/><path d="M316.5 366.5 V374.5H318.5 V358.5H320.5 V374.5H322.5 V358.5H324.5 V374.5H326.5 V358.5H333.5 V374.5H336.5 V358.5H339.5 V374.5H342.5 V358.5H347.5 V374.5H350.5 V358.5H368.5 V374.5H371.5 V358.5H376.5 V374.5H384.5 V358.5H386.5 V374.5H389.5 V358.5H398.5 V374.5H400.5 V358.5H402.5 V374.5H405.5 V358.5H407.5 V374.5H412.5 V358.5H415.5 V374.5H420.5 V358.5H428.5 V374.5H431.5 V358.5H433.5 V374.5H439.5 V358.5H441.5 V374.5H446.5 V358.5H449.5 V374.5H459.5 V358.5H466.5 V374.5H468.5 V358.5H472.5 V374.5H475.5 V358.5H477.5 V374.5H479.5 V358.5H485.5 V374.5H488.5 V358.5H491.5 V374.5H501.5 V358.5H506.5 V374.5H509.5 V358.5H522.5 V374.5H532.5 V358.5H543.5 V374.5H545.5 V358.5H548.5 V374.5H551.5 V358.5H556.5 V374.5H558.5 V358.5H561.5 V374.5H567.5 V358.5H569.5 V374.5H571.5 V358.5H574.5 V374.5H578.5 V358.5H587.5 V374.5H590.5 V358.5H596.5 V374.5H598.5 V358.5H603.5 V374.5H608.5 V358.5H613.5 V374.5H616.5 V358.5H629.5 V374.5H632.5 V358.5H637.5 V374.5H639.5 V358.5H645.5 V374.5H647.5 V358.5H652.5 V374.5H655.5 V358.5H671.5 V374.5H676.5 V358.5H678.5 V374.5H684.5 V358.5H699.5 V374.5H702.5 V358.5H704.5 V374.5H706.5 V358.5H715.5 V374.5H730.5 V358.5H733.5 V374.5H738.5 V358.5H740.5 V374.5H744.5 V358.5H748.5 V374.5H752.5 V358.5H754.5 V374.5H757.5 V358.5H770.5 V374.5H772.5 V358.5H780.5 V374.5H788.5 V358.5H796.5 V374.5H801.5 V358.5H811.5 V374.5H814.5 V358.5H819.5 V374.5H827.5 V358.5H829.5 V374.5H834.5 V358.5H840.5 V374.5H844.5 V358.5H848.5 V374.5H851.5 V358.5H871.5 V374.5H874.5 V358.5H876.5 V374.5H879.5 V358.5H881.5 V374.5H884.5 V358.5H890.5 V374.5H892.5 V358.5H905.5 V374.5H908.5 V358.5H924.5 V374.5H929" stroke="#ff0000" fill="none"/><path d="M316.5 390.5 V398.5H318.5 V382.5H320.5 V398.5H322.5 V382.5H324.5 V398.5H326.5 V382.5H333.5 V398.5H336.5 V382.5H339.5 V398.5H342.5 V382.5H347.5 V398.5H350.5 V382.5H368.5 V398.5H371.5 V382.5H376.5 V398.5H384.5 V382.5H386.5 V398.5H389.5 V382.5H398.5 V398.5H400.5 V382.5H402.5 V398.5H405.5 V382.5H407.5 V398.5H412.5 V382.5H415.5 V398.5H420.5 V382.5H428.5 V398.5H431.5 V382.5H433.5 V398.5H439.5 V382.5H441.5 V398.5H446.5 V382.5H449.5 V398.5H459.5 V382.5H466.5 V398.5H468.5 V382.5H472.5 V398.5H475.5 V382.5H477.5 V398.5H479.5 V382.5H485.5 V398.5H488.5 V382.5H491.5 V398.5H501.5 V382.5H506.5 V398.5H509.5 V382.5H522.5 V398.5H532.5 V382.5H543.5 V398.5H545.5 V382.5H548.5 V398.5H551.5 V382.5H556.5 V398.5H558.5 V382.5H561.5 V398.5H567.5 V382.5H569.5 V398.5H571.5 V382.5H574.5 V398.5H578.5 V382.5H587.5 V398.5H590.5 V382.5H596.5 V398.5H598.5 V382.5H603.5 V398.5H608.5 V382.5H613.5 V398.5H616.5 V382.5H629.5 V398.5H632.5 V382.5H637.5 V398.5H639.5 V382.5H645.5 V398.5H647.5 V382.5H652.5 V398.5H655.5 V382.5H671.5 V398.5H676.5 V382.5H678.5 V398.5H684.5 V382.5H699.5 V398.5H702.5 V382.5H704.5 V398.5H706.5 V382.5H715.5 V398.5H730.5 V382.5H733.5 V398.5H738.5 V382.5H740.5 V398.5H744.5 V382.5H748.5 V398.5H752.5 V382.5H754.5 V398.5H757.5 V382.5H770.5 V398.5H772.5 V382.5H780.5 V398.5H788.5 V382.5H796.5 V398.5H801.5 V382.5H811.5 V398.5H814.5 V382.5H819.5 V398.5H827.5 V382.5H829.5 V398.5H834.5 V382.5H840.5 V398.5H844.5 V382.5H848.5 V398.5H851.5 V382.5H871.5 V398.5H874.5 V382.5H876.5 V398.5H879.5 V382.5H881.5 V398.5H884.5 V382.5H890.5 V398.5H892.5 V382.5H905.5 V398.5H908.5 V382.5H924.5 V398.5H929" stroke="#ff0000" fill="none"/><path d="M316.5 414.5 V422.5H318.5 V406.5H323.5 V422.5H326.5 V406.5H333.5 V422.5H336.5 V406.5H347.5 V422.5H350.5 V406.5H376.5 V422.5H379.5 V406.5H386.5 V422.5H389.5 V406.5H402.5 V422.5H405.5 V406.5H407.5 V422.5H412.5 V406.5H415.5 V422.5H420.5 V406.5H428.5 V422.5H431.5 V406.5H433.5 V422.5H439.5 V406.5H449.5 V422.5H454.5 V406.5H457.5 V422.5H459.5 V406.5H466.5 V422.5H468.5 V406.5H472.5 V422.5H475.5 V406.5H485.5 V422.5H488.5 V406.5H491.5 V422.5H496.5 V406.5H498.5 V422.5H501.5 V406.5H506.5 V422.5H509.5 V406.5H527.5 V422.5H532.5 V406.5H543.5 V422.5H545.5 V406.5H548.5 V422.5H551.5 V406.5H556.5 V422.5H558.5 V406.5H561.5 V422.5H567.5 V406.5H569.5 V422.5H571.5 V406.5H587.5 V422.5H590.5 V406.5H603.5 V422.5H608.5 V406.5H613.5 V422.5H616.5 V406.5H645.5 V422.5H647.5 V406.5H652.5 V422.5H655.5 V406.5H671.5 V422.5H673.5 V406.5H678.5 V422.5H684.5 V406.5H720.5 V422.5H730.5 V406.5H733.5 V422.5H738.5 V406.5H740.5 V422.5H744.5 V406.5H748.5 V422.5H752.5 V406.5H754.5 V422.5H757.5 V406.5H770.5 V422.5H772.5 V406.5H780.5 V422.5H788.5 V406.5H796.5 V422.5H798.5 V406.5H811.5 V422.5H814.5 V406.5H819.5 V422.5H822.5 V406.5H824.5 V422.5H827.5 V406.5H829.5 V422.5H832.5 V406.5H840.5 V422.5H844.5 V406.5H848.5 V422.5H851.5 V406.5H871.5 V422.5H874.5 V406.5H876.5 V422.5H879.5 V406.5H881.5 V422.5H884.5 V406.5H890.5 V422.5H892.5 V406.5H905.5 V422.5H908.5 V406.5H926.5 V422.5H929" stroke="#ff0000" fill="none"/><path d="M316.5 438.5 V446.5H318.5 V430.5H320.5 V446.5H322.5 V430.5H324.5 V446.5H326.5 V430.5H333.5 V446.5H336.5 V430.5H347.5 V446.5H350.5 V430.5H376.5 V446.5H381.5 V430.5H386.5 V446.5H389.5 V430.5H402.5 V446.5H405.5 V430.5H407.5 V446.5H412.5 V430.5H415.5 V446.5H420.5 V430.5H428.5 V446.5H431.5 V430.5H433.5 V446.5H439.5 V430.5H449.5 V446.5H454.5 V430.5H457.5 V446.5H459.5 V430.5H466.5 V446.5H468.5 V430.5H472.5 V446.5H475.5 V430.5H485.5 V446.5H488.5 V430.5H491.5 V446.5H496.5 V430.5H498.5 V446.5H501.5 V430.5H506.5 V446.5H509.5 V430.5H527.5 V446.5H532.5 V430.5H543.5 V446.5H545.5 V430.5H548.5 V446.5H551.5 V430.5H556.5 V446.5H558.5 V430.5H561.5 V446.5H567.5 V430.5H569.5 V446.5H571.5 V430.5H587.5 V446.5H590.5 V430.5H603.5 V446.5H608.5 V430.5H613.5 V446.5H616.5 V430.5H645.5 V446.5H647.5 V430.5H652.5 V446.5H655.5 V430.5H671.5 V446.5H673.5 V430.5H678.5 V446.5H684.5 V430.5H720.5 V446.5H730.5 V430.5H733.5 V446.5H738.5 V430.5H740.5 V446.5H744.5 V430.5H748.5 V446.5H752.5 V430.5H754.5 V446.5H757.5 V430.5H770.5 V446.5H772.5 V430.5H780.5 V446.5H788.5 V430.5H796.5 V446.5H798.5 V430.5H811.5 V446.5H814.5 V430.5H819.5 V446.5H822.5 V430.5H824.5 V446.5H827.5 V430.5H829.5 V446.5H832.5 V430.5H840.5 V446.5H844.5 V430.5H848.5 V446.5H851.5 V430.5H871.5 V446.5H874.5 V430.5H876.5 V446.5H879.5 V430.5H881.5 V446.5H884.5 V430.5H890.5 V446.5H892.5 V430.5H905.5 V446.5H908.5 V430.5H926.5 V446.5H929" stroke="#ff0000" fill="none"/><path d="M316.5 462.5 V454.5H318.5 V470.5H336.5 V454.5H342.5 V470.5H351.5 V454.5H359.5 V470.5H367.5 V454.5H371.5 V470.5H376.5 V454.5H384.5 V470.5H386.5 V454.5H392.5 V470.5H402.5 V454.5H405.5 V470.5H407.5 V454.5H410.5 V470.5H431.5 V454.5H433.5 V470.5H444.5 V454.5H446.5 V470.5H449.5 V454.5H454.5 V470.5H458.5 V454.5H462.5 V470.5H470.5 V454.5H483.5 V470.5H485.5 V454.5H488.5 V470.5H491.5 V454.5H493.5 V470.5H501.5 V454.5H504.5 V470.5H517.5 V454.5H524.5 V470.5H543.5 V454.5H545.5 V470.5H569.5 V454.5H574.5 V470.5H577.5 V454.5H579.5 V470.5H584.5 V454.5H587.5 V470.5H598.5 V454.5H600.5 V470.5H603.5 V454.5H605.5 V470.5H626.5 V454.5H629.5 V470.5H637.5 V454.5H639.5 V470.5H645.5 V454.5H652.5 V470.5H660.5 V454.5H663.5 V470.5H673.5 V454.5H676.5 V470.5H684.5 V454.5H689.5 V470.5H691.5 V454.5H694.5 V470.5H699.5 V454.5H702.5 V470.5H712.5 V454.5H715.5 V470.5H738.5 V454.5H741.5 V470.5H746.5 V454.5H749.5 V470.5H751.5 V454.5H757.5 V470.5H762.5 V454.5H765.5 V470.5H770.5 V454.5H780.5 V470.5H796.5 V454.5H801.5 V470.5H814.5 V454.5H819.5 V470.5H822.5 V454.5H824.5 V470.5H832.5 V454.5H843.5 V470.5H846.5 V454.5H848.5 V470.5H851.5 V454.5H853.5 V470.5H856.5 V454.5H864.5 V470.5H874.5 V454.5H877.5 V470.5H882.5 V454.5H887.5 V470.5H897.5 V454.5H900.5 V470.5H929" stroke="#00ff00" fill="none"/><path d="M316.5 486.5 V494.5H318.5 V478.5H336.5 V494.5H342.5 V478.5H355.5 V494.5H359.5 V478.5H367.5 V494.5H371.5 V478.5H376.5 V494.5H384.5 V478.5H386.5 V494.5H392.5 V478.5H402.5 V494.5H405.5 V478.5H407.5 V494.5H410.5 V478.5H431.5 V494.5H433.5 V478.5H444.5 V494.5H446.5 V478.5H449.5 V494.5H454.5 V478.5H460.5 V494.5H462.5 V478.5H470.5 V494.5H483.5 V478.5H485.5 V494.5H488.5 V478.5H491.5 V494.5H493.5 V478.5H501.5 V494.5H504.5 V478.5H518.5 V494.5H524.5 V478.5H543.5 V494.5H545.5 V478.5H569.5 V494.5H574.5 V478.5H584.5 V494.5H587.5 V478.5H598.5 V494.5H600.5 V478.5H603.5 V494.5H605.5 V478.5H626.5 V494.5H629.5 V478.5H637.5 V494.5H639.5 V478.5H645.5 V494.5H652.5 V478.5H660.5 V494.5H663.5 V478.5H673.5 V494.5H676.5 V478.5H684.5 V494.5H689.5 V478.5H691.5 V494.5H694.5 V478.5H699.5 V494.5H702.5 V478.5H712.5 V494.5H715.5 V478.5H738.5 V494.5H741.5 V478.5H746.5 V494.5H749.5 V478.5H752.5 V494.5H757.5 V478.5H762.5 V494.5H765.5 V478.5H770.5 V494.5H780.5 V478.5H796.5 V494.5H798.5 V478.5H800.5 V494.5H804.5 V478.5H814.5 V494.5H819.5 V478.5H822.5 V494.5H824.5 V478.5H832.5 V494.5H838.5 V478.5H840.5 V494.5H843.5 V478.5H846.5 V494.5H848.5 V478.5H851.5 V494.5H853.5 V478.5H856.5 V494.5H864.5 V478.5H874.5 V494.5H877.5 V478.5H882.5 V494.5H887.5 V478.5H897.5 V494.5H900.5 V478.5H929" stroke="#00ff00" fill="none"/><path d="M316.5 510.5 V502.5H321.5 V518.5H323.5 V502.5H325.5 V518.5H327.5 V502.5H331.5 V518.5H352.5 V502.5H355.5 V518.5H368.5 V502.5H373.5 V518.5H376.5 V502.5H379.5 V518.5H454.5 V502.5H457.5 V518.5H485.5 V502.5H491.5 V518.5H517.5 V502.5H520.5 V518.5H551.5 V502.5H553.5 V518.5H577.5 V502.5H579.5 V518.5H598.5 V502.5H600.5 V518.5H603.5 V502.5H606.5 V518.5H702.5 V502.5H705.5 V518.5H715.5 V502.5H718.5 V518.5H720.5 V502.5H722.5 V518.5H754.5 V502.5H757.5 V518.5H772.5 V502.5H778.5 V518.5H788.5 V502.5H791.5 V518.5H798.5 V502.5H801.5 V518.5H837.5 V502.5H840.5 V518.5H848.5 V502.5H851.5 V518.5H890.5 V502.5H893.5 V518.5H908.5 V502.5H911.5 V518.5H929" stroke="#00ff00" fill="none"/><path d="M316.5 534.5 V542.5H493.5 V526.5H496.5 V542.5H569.5 V526.5H571.5 V542.5H929" stroke="#ff0000" fill="none"/><path d="M316.5 558.5 V566.5H929" stroke="#ff0000" fill="none"/><path d="M316.5 582.5 V590.5H318.5 V574.5H329.5 V590.5H331.5 V574.5H334.5 V590.5H339.5 V574.5H347.5 V590.5H360.5 V574.5H368.5 V590.5H373.5 V574.5H376.5 V590.5H380.5 V574.5H393.5 V590.5H397.5 V574.5H408.5 V590.5H410.5 V574.5H414.5 V590.5H418.5 V574.5H422.5 V590.5H428.5 V574.5H431.5 V590.5H433.5 V574.5H446.5 V590.5H448.5 V574.5H450.5 V590.5H459.5 V574.5H462.5 V590.5H467.5 V574.5H472.5 V590.5H478.5 V574.5H484.5 V590.5H493.5 V574.5H496.5 V590.5H501.5 V574.5H510.5 V590.5H517.5 V574.5H521.5 V590.5H524.5 V574.5H529.5 V590.5H535.5 V574.5H548.5 V590.5H574.5 V574.5H577.5 V590.5H579.5 V574.5H587.5 V590.5H610.5 V574.5H613.5 V590.5H624.5 V574.5H642.5 V590.5H645.5 V574.5H652.5 V590.5H658.5 V574.5H663.5 V590.5H665.5 V574.5H668.5 V590.5H676.5 V574.5H678.5 V590.5H683.5 V574.5H686.5 V590.5H699.5 V574.5H702.5 V590.5H704.5 V574.5H710.5 V590.5H712.5 V574.5H718.5 V590.5H725.5 V574.5H728.5 V590.5H733.5 V574.5H738.5 V590.5H744.5 V574.5H762.5 V590.5H767.5 V574.5H772.5 V590.5H782.5 V574.5H788.5 V590.5H795.5 V574.5H798.5 V590.5H804.5 V574.5H806.5 V590.5H811.5 V574.5H814.5 V590.5H819.5 V574.5H835.5 V590.5H843.5 V574.5H848.5 V590.5H852.5 V574.5H856.5 V590.5H860.5 V574.5H870.5 V590.5H872.5 V574.5H876.5 V590.5H878.5 V574.5H882.5 V590.5H887.5 V574.5H890.5 V590.5H894.5 V574.5H897.5 V590.5H904.5 V574.5H912.5 V590.5H916.5 V574.5H918.5 V590.5H924.5 V574.5H929" stroke="#ff0000" fill="none"/><path d="M316.5 606.5 V598.5H929" stroke="#ff0000" fill="none"/><path d="M416.5 114 V602" stroke="#8c8c8c" fill="none"/><path d="M516.5 114 V602" stroke="#8c8c8c" fill="none"/><path d="M616.5 114 V602" stroke="#8c8c8c" fill="none"/><path d="M716.5 114 V602" stroke="#8c8c8c" fill="none"/><path d="M816.5 114 V602" stroke="#8c8c8c" fill="none"/></svg>
<div class="" style="left:929px;top:90px;width:12px;height:512px;background:#000"></div>
<div class="track" style="left:941px;top:90px;width:16px;height:512px;"></div>
<div class="sbtn" style="left:941px;top:90px;width:16px;height:16px;"><svg style="left:0;top:0" width="14" height="14"><path d="M3 9 H10 L6.5 5.5 Z" fill="#000"/></svg></div>
<div class="sbtn" style="left:941px;top:106px;width:16px;height:16px;"></div>
<div class="sbtn" style="left:941px;top:586px;width:16px;height:16px;"><svg style="left:0;top:0" width="14" height="14"><path d="M3 5 H10 L6.5 8.5 Z" fill="#000"/></svg></div>
<div class="track" style="left:4px;top:604px;width:955px;height:16px;"></div>
<div class="sbtn" style="left:4px;top:604px;width:16px;height:16px;"><svg style="left:0;top:0" width="14" height="14"><path d="M9 3 V10 L5.5 6.5 Z" fill="#000"/></svg></div>
<div class="sbtn" style="left:20px;top:604px;width:16px;height:16px;"></div>
<div class="sbtn" style="left:943px;top:604px;width:16px;height:16px;"><svg style="left:0;top:0" width="14" height="14"><path d="M6 3 V10 L9.5 6.5 Z" fill="#000"/></svg></div>
<div class="" style="left:0px;top:620px;width:963px;height:2px;background:#d4d0c8"></div>
<div class="stat" style="left:4px;top:622px;width:100px;height:17px;"></div>
<div class="stat" style="left:106px;top:622px;width:98px;height:17px;background:#ff0000"></div>
<div class="stat" style="left:206px;top:622px;width:297px;height:17px;background:#002000"></div>
<div class="" style="left:269px;top:630px;width:17px;height:1px;background:#ff0000"></div>
<div class="" style="left:354px;top:630px;width:17px;height:1px;background:#00ff00"></div>
<div class="" style="left:427px;top:630px;width:17px;height:1px;background:#c0c0c0"></div>
<div class="stat" style="left:506px;top:622px;width:453px;height:17px;"></div>
<svg style="left:945px;top:625px" width="13" height="13" viewBox="0 0 13 13"><path d="M12 1 L1 12 M12 5 L5 12 M12 9 L9 12" stroke="#fff" stroke-width="1"/><path d="M12.5 2 L2 12.5 M12.5 3 L3 12.5 M12.5 6 L6 12.5 M12.5 7 L7 12.5 M12.5 10 L10 12.5 M12.5 11 L11 12.5" stroke="#808080" stroke-width="1"/></svg>
<span class="t L m" style="left:25px;top:4.67px;font-size:12.5px;color:#fff;transform:scaleX(0.9139)">Advanced JTAG Logic Analyzer 2.04(B02) TokushuDenshiKairo Inc.</span><span class="t J m" style="left:14.5px;top:55.25px;font-size:12.5px;color:#000;transform:scaleX(0.8900)">データ長</span><span class="t L m" style="left:76.5px;top:54.17px;font-size:12.5px;color:#000;transform:scaleX(0.8572)">10000</span><span class="t J m" style="left:153.3px;top:53.55px;font-size:12.5px;color:#000;transform:scaleX(0.8640)">トリガ位置</span><span class="t L m" style="left:219.5px;top:52.67px;font-size:12.5px;color:#000;transform:scaleX(0.6914)">6%</span><span class="t J m" style="left:289.7px;top:49.25px;font-size:12.5px;color:#000;transform:scaleX(0.8560)">トリガ条件</span><span class="t L m" style="left:311px;top:62.17px;font-size:12.5px;color:#000;transform:scaleX(0.8521)">AND</span><span class="t L m" style="left:369px;top:62.17px;font-size:12.5px;color:#000;transform:scaleX(0.8533)">OR</span><span class="t L m" style="left:431.5px;top:26.47px;font-size:12.5px;color:#000;transform:scaleX(0.8665)">Blogana USEROP</span><span class="t L m" style="left:535px;top:27.17px;font-size:12.5px;color:#000;transform:scaleX(0.8629)">0</span><span class="t L m" style="left:609px;top:27.17px;font-size:12.5px;color:#000;transform:scaleX(0.8304)">OK</span><span class="t J m" style="left:9px;top:92.05px;font-size:12.5px;color:#000;transform:scaleX(0.9000)">デバイス</span><div style="left:98px;top:92.05px;width:34px;height:16.00px;overflow:hidden"><span class="t J m" style="left:0;top:0;font-size:12.5px;color:#000;transform:scaleX(0.8800)">ピン番号</span></div><span class="t J m" style="left:136.5px;top:92.05px;font-size:12.5px;color:#000;transform:scaleX(0.8800)">ピン名</span><span class="t J m" style="left:201px;top:92.05px;font-size:12.5px;color:#000;transform:scaleX(0.9600)">ユーザ名</span><span class="t J m" style="left:284.5px;top:92.05px;font-size:12.5px;color:#000;transform:scaleX(0.9200)">値</span><span class="t L m" style="left:8.7px;top:115.17px;font-size:12.5px;color:#000;transform:scaleX(0.8593)">xc3s700an_FG48</span><span class="t L m" style="left:98px;top:115.17px;font-size:12.5px;color:#000;transform:scaleX(0.8560)">B11</span><span class="t L m" style="left:135.8px;top:115.17px;font-size:12.5px;color:#000;transform:scaleX(0.8788)">PAD50</span><span class="t L m" style="left:199.8px;top:115.17px;font-size:12.5px;color:#000;transform:scaleX(0.8479)">VGA_VSYNC</span><span class="t L m" style="left:284.6px;top:116.17px;font-size:12.5px;color:#c8c8c8;transform:scaleX(0.8869)">X</span><span class="t L m" style="left:8.7px;top:139.17px;font-size:12.5px;color:#000;transform:scaleX(0.8593)">xc3s700an_FG48</span><span class="t L m" style="left:98px;top:139.17px;font-size:12.5px;color:#000;transform:scaleX(0.8560)">C8</span><span class="t L m" style="left:135.8px;top:139.17px;font-size:12.5px;color:#000;transform:scaleX(0.8788)">PAD34</span><span class="t L m" style="left:199.8px;top:139.17px;font-size:12.5px;color:#000;transform:scaleX(0.8289)">VGA_R&lt;3&gt;</span><span class="t L m" style="left:284.6px;top:140.17px;font-size:12.5px;color:#c8c8c8;transform:scaleX(0.8869)">X</span><span class="t L m" style="left:8.7px;top:163.17px;font-size:12.5px;color:#000;transform:scaleX(0.8593)">xc3s700an_FG48</span><span class="t L m" style="left:98px;top:163.17px;font-size:12.5px;color:#000;transform:scaleX(0.8560)">B8</span><span class="t L m" style="left:135.8px;top:163.17px;font-size:12.5px;color:#000;transform:scaleX(0.8788)">PAD35</span><span class="t L m" style="left:199.8px;top:163.17px;font-size:12.5px;color:#000;transform:scaleX(0.8289)">VGA_R&lt;2&gt;</span><span class="t L m" style="left:284.6px;top:164.17px;font-size:12.5px;color:#c8c8c8;transform:scaleX(0.8869)">X</span><span class="t L m" style="left:8.7px;top:187.17px;font-size:12.5px;color:#000;transform:scaleX(0.8593)">xc3s700an_FG48</span><span class="t L m" style="left:98px;top:187.17px;font-size:12.5px;color:#000;transform:scaleX(0.8560)">B3</span><span class="t L m" style="left:135.8px;top:187.17px;font-size:12.5px;color:#000;transform:scaleX(0.8788)">PAD14</span><span class="t L m" style="left:199.8px;top:187.17px;font-size:12.5px;color:#000;transform:scaleX(0.8289)">VGA_R&lt;1&gt;</span><span class="t L m" style="left:284.6px;top:188.17px;font-size:12.5px;color:#c8c8c8;transform:scaleX(0.8869)">X</span><span class="t L m" style="left:8.7px;top:211.17px;font-size:12.5px;color:#000;transform:scaleX(0.8593)">xc3s700an_FG48</span><span class="t L m" style="left:98px;top:211.17px;font-size:12.5px;color:#000;transform:scaleX(0.8560)">A3</span><span class="t L m" style="left:135.8px;top:211.17px;font-size:12.5px;color:#000;transform:scaleX(0.8788)">PAD15</span><span class="t L m" style="left:199.8px;top:211.17px;font-size:12.5px;color:#000;transform:scaleX(0.8289)">VGA_R&lt;0&gt;</span><span class="t L m" style="left:284.6px;top:212.17px;font-size:12.5px;color:#c8c8c8;transform:scaleX(0.8869)">X</span><span class="t L m" style="left:8.7px;top:235.17px;font-size:12.5px;color:#000;transform:scaleX(0.8593)">xc3s700an_FG48</span><span class="t L m" style="left:98px;top:235.17px;font-size:12.5px;color:#000;transform:scaleX(0.8560)">C11</span><span class="t L m" style="left:135.8px;top:235.17px;font-size:12.5px;color:#000;transform:scaleX(0.8788)">PAD49</span><span class="t L m" style="left:199.8px;top:235.17px;font-size:12.5px;color:#000;transform:scaleX(0.8404)">VGA_HSYNC</span><span class="t L m" style="left:284.6px;top:236.17px;font-size:12.5px;color:#c8c8c8;transform:scaleX(0.8869)">X</span><span class="t L m" style="left:8.7px;top:259.17px;font-size:12.5px;color:#000;transform:scaleX(0.8593)">xc3s700an_FG48</span><span class="t L m" style="left:98px;top:259.17px;font-size:12.5px;color:#000;transform:scaleX(0.8560)">D6</span><span class="t L m" style="left:135.8px;top:259.17px;font-size:12.5px;color:#000;transform:scaleX(0.8788)">PAD24</span><span class="t L m" style="left:199.8px;top:259.17px;font-size:12.5px;color:#000;transform:scaleX(0.8201)">VGA_G&lt;3&gt;</span><span class="t L m" style="left:284.6px;top:260.17px;font-size:12.5px;color:#c8c8c8;transform:scaleX(0.8869)">X</span><span class="t L m" style="left:8.7px;top:283.17px;font-size:12.5px;color:#000;transform:scaleX(0.8593)">xc3s700an_FG48</span><span class="t L m" style="left:98px;top:283.17px;font-size:12.5px;color:#000;transform:scaleX(0.8560)">C6</span><span class="t L m" style="left:135.8px;top:283.17px;font-size:12.5px;color:#000;transform:scaleX(0.8788)">PAD25</span><span class="t L m" style="left:199.8px;top:283.17px;font-size:12.5px;color:#000;transform:scaleX(0.8201)">VGA_G&lt;2&gt;</span><span class="t L m" style="left:284.6px;top:284.17px;font-size:12.5px;color:#c8c8c8;transform:scaleX(0.8869)">X</span><span class="t L m" style="left:8.7px;top:307.17px;font-size:12.5px;color:#000;transform:scaleX(0.8593)">xc3s700an_FG48</span><span class="t L m" style="left:98px;top:307.17px;font-size:12.5px;color:#000;transform:scaleX(0.8560)">D5</span><span class="t L m" style="left:135.8px;top:307.17px;font-size:12.5px;color:#000;transform:scaleX(0.8788)">PAD16</span><span class="t L m" style="left:199.8px;top:307.17px;font-size:12.5px;color:#000;transform:scaleX(0.8201)">VGA_G&lt;1&gt;</span><span class="t L m" style="left:284.6px;top:308.17px;font-size:12.5px;color:#c8c8c8;transform:scaleX(0.8869)">X</span><span class="t L m" style="left:8.7px;top:331.17px;font-size:12.5px;color:#000;transform:scaleX(0.8593)">xc3s700an_FG48</span><span class="t L m" style="left:98px;top:331.17px;font-size:12.5px;color:#000;transform:scaleX(0.8560)">C5</span><span class="t L m" style="left:135.8px;top:331.17px;font-size:12.5px;color:#000;transform:scaleX(0.8788)">PAD17</span><span class="t L m" style="left:199.8px;top:331.17px;font-size:12.5px;color:#000;transform:scaleX(0.8201)">VGA_G&lt;0&gt;</span><span class="t L m" style="left:284.6px;top:332.17px;font-size:12.5px;color:#c8c8c8;transform:scaleX(0.8869)">X</span><span class="t L m" style="left:8.7px;top:355.17px;font-size:12.5px;color:#000;transform:scaleX(0.8593)">xc3s700an_FG48</span><span class="t L m" style="left:98px;top:355.17px;font-size:12.5px;color:#000;transform:scaleX(0.8560)">C9</span><span class="t L m" style="left:135.8px;top:355.17px;font-size:12.5px;color:#000;transform:scaleX(0.8788)">PAD36</span><span class="t L m" style="left:199.8px;top:355.17px;font-size:12.5px;color:#000;transform:scaleX(0.8379)">VGA_B&lt;3&gt;</span><span class="t L m" style="left:284.6px;top:356.17px;font-size:12.5px;color:#c8c8c8;transform:scaleX(0.8869)">X</span><span class="t L m" style="left:8.7px;top:379.17px;font-size:12.5px;color:#000;transform:scaleX(0.8593)">xc3s700an_FG48</span><span class="t L m" style="left:98px;top:379.17px;font-size:12.5px;color:#000;transform:scaleX(0.8560)">B9</span><span class="t L m" style="left:135.8px;top:379.17px;font-size:12.5px;color:#000;transform:scaleX(0.8788)">PAD37</span><span class="t L m" style="left:199.8px;top:379.17px;font-size:12.5px;color:#000;transform:scaleX(0.8379)">VGA_B&lt;2&gt;</span><span class="t L m" style="left:284.6px;top:380.17px;font-size:12.5px;color:#c8c8c8;transform:scaleX(0.8869)">X</span><span class="t L m" style="left:8.7px;top:403.17px;font-size:12.5px;color:#000;transform:scaleX(0.8593)">xc3s700an_FG48</span><span class="t L m" style="left:98px;top:403.17px;font-size:12.5px;color:#000;transform:scaleX(0.8560)">D7</span><span class="t L m" style="left:135.8px;top:403.17px;font-size:12.5px;color:#000;transform:scaleX(0.8788)">PAD30</span><span class="t L m" style="left:199.8px;top:403.17px;font-size:12.5px;color:#000;transform:scaleX(0.8379)">VGA_B&lt;1&gt;</span><span class="t L m" style="left:284.6px;top:404.17px;font-size:12.5px;color:#c8c8c8;transform:scaleX(0.8869)">X</span><span class="t L m" style="left:8.7px;top:427.17px;font-size:12.5px;color:#000;transform:scaleX(0.8593)">xc3s700an_FG48</span><span class="t L m" style="left:98px;top:427.17px;font-size:12.5px;color:#000;transform:scaleX(0.8560)">C7</span><span class="t L m" style="left:135.8px;top:427.17px;font-size:12.5px;color:#000;transform:scaleX(0.8788)">PAD29</span><span class="t L m" style="left:199.8px;top:427.17px;font-size:12.5px;color:#000;transform:scaleX(0.8379)">VGA_B&lt;0&gt;</span><span class="t L m" style="left:284.6px;top:428.17px;font-size:12.5px;color:#c8c8c8;transform:scaleX(0.8869)">X</span><span class="t L m" style="left:8.7px;top:451.17px;font-size:12.5px;color:#000;transform:scaleX(0.8593)">xc3s700an_FG48</span><span class="t L m" style="left:98px;top:451.17px;font-size:12.5px;color:#000;transform:scaleX(0.8560)">U13</span><span class="t L m" style="left:135.8px;top:451.17px;font-size:12.5px;color:#000;transform:scaleX(0.8874)">PAD227</span><span class="t L m" style="left:199.8px;top:451.17px;font-size:12.5px;color:#000;transform:scaleX(0.8044)">NF_D&lt;3&gt;</span><span class="t L m" style="left:284.6px;top:452.17px;font-size:12.5px;color:#c8c8c8;transform:scaleX(0.8869)">X</span><span class="t L m" style="left:8.7px;top:475.17px;font-size:12.5px;color:#000;transform:scaleX(0.8593)">xc3s700an_FG48</span><span class="t L m" style="left:98px;top:475.17px;font-size:12.5px;color:#000;transform:scaleX(0.8560)">AA17</span><span class="t L m" style="left:135.8px;top:475.17px;font-size:12.5px;color:#000;transform:scaleX(0.8874)">PAD223</span><span class="t L m" style="left:199.8px;top:475.17px;font-size:12.5px;color:#000;transform:scaleX(0.8044)">NF_D&lt;2&gt;</span><span class="t L m" style="left:284.6px;top:476.17px;font-size:12.5px;color:#c8c8c8;transform:scaleX(0.8869)">X</span><span class="t L m" style="left:8.7px;top:499.17px;font-size:12.5px;color:#000;transform:scaleX(0.8593)">xc3s700an_FG48</span><span class="t L m" style="left:98px;top:499.17px;font-size:12.5px;color:#000;transform:scaleX(0.8560)">Y17</span><span class="t L m" style="left:135.8px;top:499.17px;font-size:12.5px;color:#000;transform:scaleX(0.8874)">PAD222</span><span class="t L m" style="left:199.8px;top:499.17px;font-size:12.5px;color:#000;transform:scaleX(0.8044)">NF_D&lt;1&gt;</span><span class="t L m" style="left:284.6px;top:500.17px;font-size:12.5px;color:#c8c8c8;transform:scaleX(0.8869)">X</span><span class="t L m" style="left:8.7px;top:523.17px;font-size:12.5px;color:#000;transform:scaleX(0.8593)">xc3s700an_FG48</span><span class="t L m" style="left:98px;top:523.17px;font-size:12.5px;color:#000;transform:scaleX(0.8560)">W20</span><span class="t L m" style="left:135.8px;top:523.17px;font-size:12.5px;color:#000;transform:scaleX(0.8874)">PAD193</span><span class="t L m" style="left:199.8px;top:523.17px;font-size:12.5px;color:#000;transform:scaleX(0.8052)">NF_CE</span><span class="t L m" style="left:284.6px;top:524.17px;font-size:12.5px;color:#c8c8c8;transform:scaleX(0.8869)">X</span><span class="t L m" style="left:8.7px;top:547.17px;font-size:12.5px;color:#000;transform:scaleX(0.8593)">xc3s700an_FG48</span><span class="t L m" style="left:98px;top:547.17px;font-size:12.5px;color:#000;transform:scaleX(0.8560)">Y21</span><span class="t L m" style="left:135.8px;top:547.17px;font-size:12.5px;color:#000;transform:scaleX(0.8874)">PAD195</span><span class="t L m" style="left:199.8px;top:547.17px;font-size:12.5px;color:#000;transform:scaleX(0.8389)">NF_BYTE</span><span class="t L m" style="left:284.6px;top:548.17px;font-size:12.5px;color:#c8c8c8;transform:scaleX(0.8869)">X</span><span class="t L m" style="left:8.7px;top:571.17px;font-size:12.5px;color:#000;transform:scaleX(0.8593)">xc3s700an_FG48</span><span class="t L m" style="left:98px;top:571.17px;font-size:12.5px;color:#000;transform:scaleX(0.8560)">C21</span><span class="t L m" style="left:135.8px;top:571.17px;font-size:12.5px;color:#000;transform:scaleX(0.8874)">PAD107</span><span class="t L m" style="left:199.8px;top:571.17px;font-size:12.5px;color:#000;transform:scaleX(0.8186)">NF_A&lt;21&gt;</span><span class="t L m" style="left:284.6px;top:572.17px;font-size:12.5px;color:#c8c8c8;transform:scaleX(0.8869)">X</span><div style="left:8.7px;top:595.17px;width:400px;height:6.83px;overflow:hidden"><span class="t L m" style="left:0;top:0;font-size:12.5px;color:#000;transform:scaleX(0.8593)">xc3s700an_FG48</span></div><div style="left:98px;top:595.17px;width:400px;height:6.83px;overflow:hidden"><span class="t L m" style="left:0;top:0;font-size:12.5px;color:#000;transform:scaleX(0.8560)">C22</span></div><div style="left:135.8px;top:595.17px;width:400px;height:6.83px;overflow:hidden"><span class="t L m" style="left:0;top:0;font-size:12.5px;color:#000;transform:scaleX(0.8874)">PAD108</span></div><div style="left:199.8px;top:595.17px;width:400px;height:6.83px;overflow:hidden"><span class="t L m" style="left:0;top:0;font-size:12.5px;color:#000;transform:scaleX(0.8186)">NF_A&lt;20&gt;</span></div><div style="left:284.6px;top:596.17px;width:400px;height:5.83px;overflow:hidden"><span class="t L m" style="left:0;top:0;font-size:12.5px;color:#c8c8c8;transform:scaleX(0.8869)">X</span></div><span class="t L m" style="left:312.8px;top:97.97px;font-size:12.5px;color:#00ff00;transform:scaleX(0.8342);-webkit-text-stroke:0.35px">0</span><span class="t L m" style="left:407.45px;top:97.97px;font-size:12.5px;color:#00ff00;transform:scaleX(0.8390);-webkit-text-stroke:0.35px">200</span><span class="t L m" style="left:507.45px;top:97.97px;font-size:12.5px;color:#00ff00;transform:scaleX(0.8390);-webkit-text-stroke:0.35px">400</span><span class="t L m" style="left:607.45px;top:97.97px;font-size:12.5px;color:#00ff00;transform:scaleX(0.8390);-webkit-text-stroke:0.35px">600</span><span class="t L m" style="left:707.45px;top:97.97px;font-size:12.5px;color:#00ff00;transform:scaleX(0.8390);-webkit-text-stroke:0.35px">800</span><span class="t L m" style="left:803.75px;top:97.97px;font-size:12.5px;color:#00ff00;transform:scaleX(0.8449);-webkit-text-stroke:0.35px">1000</span><span class="t L m" style="left:900px;top:96.97px;font-size:12.5px;color:#00ff00;transform:scaleX(0.8097);-webkit-text-stroke:0.35px">ms</span><span class="t L m" style="left:5.3px;top:622.47px;font-size:12.5px;color:#000;transform:scaleX(0.8294)">503</span><span class="t J m" style="left:108.3px;top:622.55px;font-size:12.5px;color:#000;transform:scaleX(0.9467)">計測中</span><span class="t L m" style="left:209.5px;top:623.17px;font-size:12.5px;color:#d0d0d0;transform:scaleX(0.8357)">Notes...</span><span class="t L m" style="left:288.5px;top:623.17px;font-size:12.5px;color:#d0d0d0;transform:scaleX(0.8854)">OUTPUT</span><span class="t L m" style="left:373.5px;top:623.17px;font-size:12.5px;color:#d0d0d0;transform:scaleX(0.8933)">INPUT</span><span class="t L m" style="left:447px;top:623.17px;font-size:12.5px;color:#d0d0d0;transform:scaleX(0.9460)">HI-Z</span>
</div>
</body></html>
